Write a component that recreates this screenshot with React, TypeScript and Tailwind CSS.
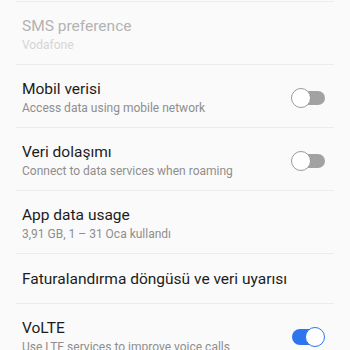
import React from "react";

type Row = {
  title: string;
  subtitle?: string;
  disabled?: boolean;
  toggle?: "on" | "off";
};

const rows: Row[] = [
  { title: "SMS preference", subtitle: "Vodafone", disabled: true },
  { title: "Mobil verisi", subtitle: "Access data using mobile network", toggle: "off" },
  { title: "Veri dolaşımı", subtitle: "Connect to data services when roaming", toggle: "off" },
  { title: "App data usage", subtitle: "3,91 GB, 1 – 31 Oca kullandı" },
  { title: "Faturalandırma döngüsü ve veri uyarısı" },
  { title: "VoLTE", subtitle: "Use LTE services to improve voice calls", toggle: "on" },
];

function Toggle({ on }: { on: boolean }) {
  if (on) {
    return (
      <div className="relative h-[20px] w-[33px]">
        <div className="absolute left-0 top-[2px] h-[16px] w-[28px] rounded-full bg-[#2f74ef]" />
        <div className="absolute right-0 top-0 h-[20px] w-[20px] rounded-full border-[1.5px] border-[#2f74ef] bg-white" />
      </div>
    );
  }
  return (
    <div className="relative h-[20px] w-[34px]">
      <div className="absolute right-0 top-[3px] h-[14px] w-[26px] rounded-full bg-[#a2a2a2]" />
      <div className="absolute left-0 top-0 h-[20px] w-[20px] rounded-full border-[1.5px] border-[#9a9a9a] bg-white" />
    </div>
  );
}

export default function App() {
  return (
    <div className="h-[350px] w-[350px] overflow-hidden bg-[#fafafa] font-['Roboto',sans-serif]">
      <div className="h-[1px]" />
      {rows.map((r, i) => (
        <div key={i}>
          <div className="mx-[16px] h-px bg-[#ececec]" />
          <div
            className={`flex items-center pl-[22px] pr-[25px] ${r.subtitle ? "h-[62px] pt-[3px]" : "h-[49px]"}`}
          >
            <div className="flex-1">
              <div
                className={`text-[15.5px] leading-[20px] ${r.disabled ? "text-[#b3b3b3]" : "text-[#1c1c1c]"}`}
              >
                {r.title}
              </div>
              {r.subtitle && (
                <div
                  className={`text-[12px] leading-[18px] ${r.disabled ? "text-[#d5d5d5]" : "text-[#8e8e8e]"}`}
                >
                  {r.subtitle}
                </div>
              )}
            </div>
            {r.toggle && <Toggle on={r.toggle === "on"} />}
          </div>
        </div>
      ))}
    </div>
  );
}
